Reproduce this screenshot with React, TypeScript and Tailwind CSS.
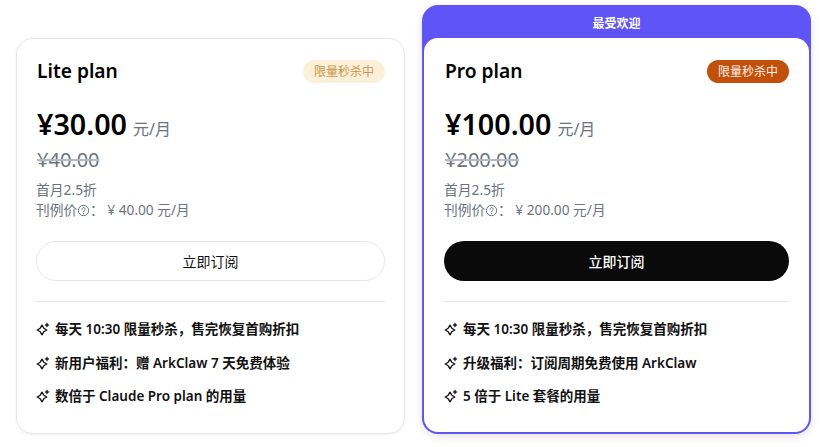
import React from "react";

function Sparkle() {
  return (
    <svg width="14" height="14" viewBox="0 0 14 14" fill="none" stroke="#111" strokeWidth="1.3" strokeLinejoin="round" className="shrink-0">
      <path d="M6 3.2 L7.8 6.2 L10.8 8 L7.8 9.8 L6 12.8 L4.2 9.8 L1.2 8 L4.2 6.2 Z" />
      <path d="M11 0.8 L11.7 2.3 L13.2 3 L11.7 3.7 L11 5.2 L10.3 3.7 L8.8 3 L10.3 2.3 Z" fill="#111" strokeWidth="0.4" />
    </svg>
  );
}

function Help() {
  return (
    <svg width="13" height="13" viewBox="0 0 13 13" fill="none" stroke="#6b7280" strokeWidth="1" className="shrink-0">
      <circle cx="6.5" cy="6.5" r="5.2" />
      <path d="M4.9 5.2a1.6 1.6 0 1 1 2.5 1.3c-.6.4-.9.6-.9 1.2" strokeLinecap="round" />
      <path d="M6.5 9.2v.5" strokeLinecap="round" />
    </svg>
  );
}

type Plan = {
  name: string;
  price: string;
  old: string;
  list: string;
  features: string[];
  pro?: boolean;
};

function Body({ p }: { p: Plan }) {
  return (
    <>
      <div className="flex items-center justify-between h-[24px] mt-[4px]">
        <h2 className="pl-px text-[19.2px] font-semibold text-black leading-[24px]">{p.name}</h2>
        <span
          className={
            p.pro
              ? "h-[23px] w-[82px] rounded-full bg-[#c2500a] text-[#fff1e8] text-[12px] leading-[23px] text-center"
              : "h-[23px] w-[82px] rounded-full bg-[#fdf0d8] text-[#c8964f] text-[12px] leading-[23px] text-center"
          }
        >
          限量秒杀中
        </span>
      </div>
      <div className="flex items-baseline mt-[23px] h-[36px] pl-px">
        <span className="text-[28.7px] font-semibold text-black leading-[36px]">{p.price}</span>
        <span className="text-[16px] text-[#6b7280] ml-[6px]">元/月</span>
      </div>
      <div className="pl-px text-[20px] text-[#6b7280] line-through decoration-[#b4b8bf] leading-[28px] mt-[4px]">{p.old}</div>
      <div className="text-[13.8px] text-[#6b7280] leading-[20px] mt-[6px]">首月2.5折</div>
      <div className="flex items-center text-[13.7px] text-[#6b7280] leading-[20px]">
        刊例价<Help />：&nbsp;¥ {p.list} 元/月
      </div>
      <button
        className={
          p.pro
            ? "mt-[21px] w-full h-[40px] rounded-full bg-[#0a0a0a] text-white text-[14px] font-medium"
            : "mt-[21px] w-full h-[40px] rounded-full bg-white border border-[#e5e7eb] text-[#111] text-[14px]"
        }
      >
        立即订阅
      </button>
      <div className="h-px bg-[#e5e7eb] mt-[20px]" />
      <ul className="mt-[17px] flex flex-col gap-[13.5px]">
        {p.features.map((f) => (
          <li key={f} className="flex items-center gap-[5px] h-[20px] text-[13.5px] font-semibold text-[#111] leading-[20px]">
            <Sparkle />
            <span>{f}</span>
          </li>
        ))}
      </ul>
    </>
  );
}

const lite: Plan = {
  name: "Lite plan",
  price: "¥30.00",
  old: "¥40.00",
  list: "40.00",
  features: ["每天 10:30 限量秒杀，售完恢复首购折扣", "新用户福利：赠 ArkClaw 7 天免费体验", "数倍于 Claude Pro plan 的用量"],
};
const pro: Plan = {
  name: "Pro plan",
  price: "¥100.00",
  old: "¥200.00",
  list: "200.00",
  pro: true,
  features: ["每天 10:30 限量秒杀，售完恢复首购折扣", "升级福利：订阅周期免费使用 ArkClaw", "5 倍于 Lite 套餐的用量"],
};

export default function App() {
  return (
    <div className="w-[820px] h-[447px] bg-white overflow-hidden flex items-end gap-[17px] pl-[16px] pb-[13px] font-['Noto_Sans','Noto_Sans_CJK_SC',sans-serif]">
      <div className="w-[389px] h-[396px] rounded-[16px] border border-[#e5e7eb] bg-white px-[19px] pt-[16px] shadow-[0_1px_3px_rgba(0,0,0,0.06)]">
        <Body p={lite} />
      </div>
      <div className="w-[389px] h-[429px] rounded-[16px] bg-[#5f54f5] p-[2px] pt-0 flex flex-col shadow-[0_2px_8px_rgba(0,0,0,0.12)]">
        <div className="h-[33px] text-center text-white text-[12px] font-semibold leading-[37px]">最受欢迎</div>
        <div className="flex-1 rounded-[14px] bg-white px-[20px] pt-[17px]">
          <Body p={pro} />
        </div>
      </div>
    </div>
  );
}
